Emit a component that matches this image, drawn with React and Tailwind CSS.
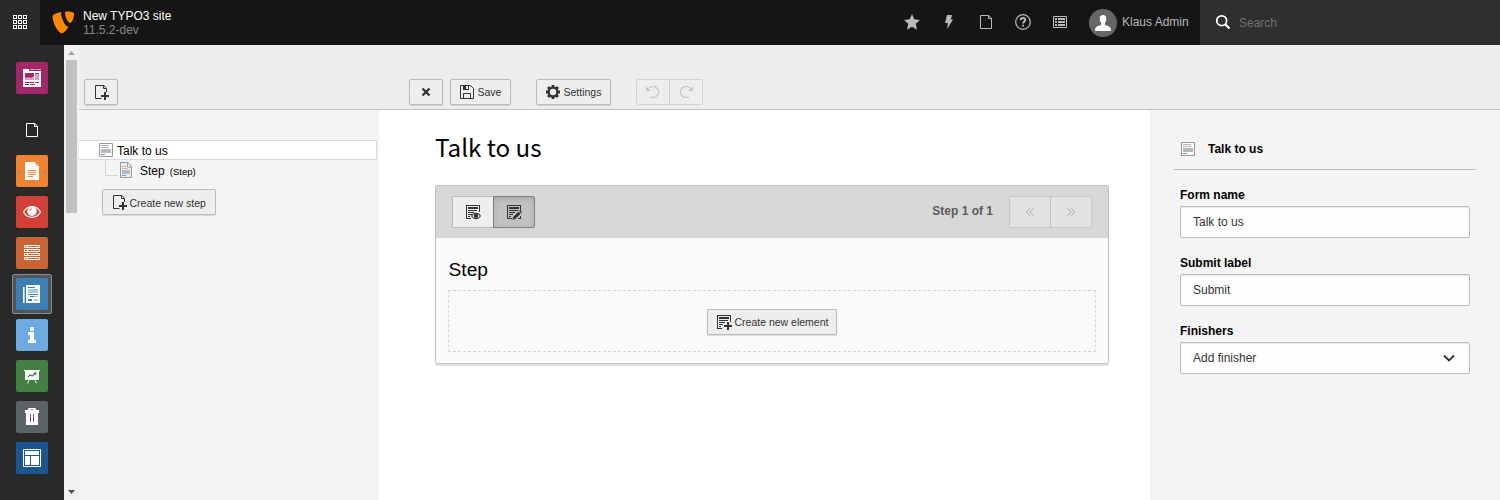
import React from "react";

const Svg = ({ size = 16, box = 16, className = "", children }) => (
  <svg width={size} height={size} viewBox={`0 0 ${box} ${box}`} fill="currentColor" className={`block shrink-0 ${className}`}>
    {children}
  </svg>
);

const Line = (props) => <path fill="none" stroke="currentColor" {...props} />;

/* ---------- action icons, 16px grid ---------- */

const PageIcon = () => (
  <Svg>
    <Line d="M2.5 1.5h8.3l2.7 2.7v10.3h-11z" />
    <Line d="M10.5 2v2.5h3" />
  </Svg>
);

const PageAddIcon = () => (
  <Svg>
    <Line d="M8.5 14.5h-6v-13h8.3l2.7 2.7v3.8" />
    <Line d="M10.5 2v2.5h3" />
    <path d="M11 8h2v3h3v2h-3v3h-2v-3H8v-2h3z" />
  </Svg>
);

const CloseIcon = () => (
  <Svg>
    <Line d="M4.5 4.5l7 7M11.5 4.5l-7 7" strokeWidth="2.3" />
  </Svg>
);

const SaveIcon = () => (
  <Svg>
    <Line d="M1.5 1.5h10l3 3v10h-13z" />
    <path d="M4 1h6v5H4zm3 1v3h2V2z" fillRule="evenodd" />
    <Line d="M4.5 14.5v-5h7v5" />
  </Svg>
);

const CogIcon = () => (
  <Svg>
    <circle cx="8" cy="8" r="4.4" fill="none" stroke="currentColor" strokeWidth="2.3" />
    <path d="M6.6 1h2.8v2.6H6.6zM6.6 12.4h2.8V15H6.6zM1 6.6h2.6v2.8H1zM12.4 6.6H15v2.8h-2.6z" />
    <path transform="rotate(45 8 8)" d="M6.6 1h2.8v2.6H6.6zM6.6 12.4h2.8V15H6.6zM1 6.6h2.6v2.8H1zM12.4 6.6H15v2.8h-2.6z" />
  </Svg>
);

const UndoIcon = ({ flip }) => (
  <Svg className={flip ? "-scale-x-100" : ""}>
    <Line d="M4 4.2A5.5 5.5 0 1 1 5.3 12.8" strokeWidth="1.1" />
    <path d="M1.2 2.6v4.2h4.3z" />
  </Svg>
);

const FormLines = () => (
  <>
    <path d="M1 1h14v7h-1V2H2v12h4v1H1z" />
    <path d="M3 3h10v2H3zM3 6h9v1H3zM3 8h6v1H3zM3 10h4v1H3zM3 12h2v1H3z" />
  </>
);

const FormPreviewIcon = () => (
  <Svg>
    <FormLines />
    <path fillRule="evenodd" d="M6 12c1.2-2 3-3.2 5-3.2s3.9 1.200 5 3.200c-1.200 2-3 3.200-5 3.200S7.100 14 6 12zm1.300 0c.700 1.300 1.900 2.200 3.700 2.200s3-.900 3.700-2.200c-.700-1.300-1.900-2.200-3.700-2.200s-3 .900-3.700 2.200z" />
    <circle cx="11" cy="11.700" r="2.200" />
  </Svg>
);

const FormEditIcon = () => (
  <Svg>
    <FormLines />
    <path d="M6.500 15.800l.700-2.800 5.300-5.300 2.100 2.100-5.300 5.300zM13.100 7.100l.8-.8 2.100 2.100-.8.8z" />
    <path d="M14 12h1v3h-3v-1h2z" />
  </Svg>
);

const FormAddIcon = () => (
  <Svg>
    <FormLines />
    <path d="M11 8h2v3h3v2h-3v3h-2v-3H8v-2h3z" />
  </Svg>
);

const ChevronsIcon = ({ flip }) => (
  <Svg className={flip ? "-scale-x-100" : ""}>
    <Line d="M8 4.300L4.400 8 8 11.700M11.600 4.300L8 8l3.600 3.700" />
  </Svg>
);

const FormIcon = () => (
  <Svg>
    <path fill="#fff" d="M1 1h14v14H1z" />
    <path fill="none" stroke="#999" d="M1.500 1.500h13v13h-13z" />
    <path fill="#b9b9b9" d="M3 3h8v1H3zM3 5h8v1H3zM3 7h10v4H3z" />
    <path fill="#5599ff" d="M3 12h4v1H3z" />
  </Svg>
);

const StepIcon = () => (
  <Svg>
    <path fill="#efefef" d="M2 0h8l4 4v12H2z" />
    <path fill="none" stroke="#999" d="M2.500.500h7.300l3.700 3.700v11.300h-11z" />
    <path fill="none" stroke="#999" d="M9.500 1v4h4" />
    <path fill="#b9b9b9" d="M4 4h4v1H4zM4 6h6v1H4zM4 8h8v4H4z" />
    <path fill="#5599ff" d="M4 13h4v1H4z" />
  </Svg>
);

/* ---------- top bar icons ---------- */

const GridIcon = () => (
  <Svg>
    {[1.5, 6.5, 11.5].map((y) =>
      [1.5, 6.5, 11.5].map((x) => <rect key={`${x}-${y}`} x={x} y={y} width="3" height="3" fill="none" stroke="currentColor" />)
    )}
  </Svg>
);

const Logo = () => (
  <Svg size={27}>
    <path d="M11.1 10.3c-.2 0-.3.1-.5.1C9 10.4 6.6 4.800 6.600 2.900c0-.700.200-.900.400-1.100C5 2 2.600 2.800 1.800 3.700c-.200.300-.300.600-.300 1.100 0 2.900 3.100 9.600 5.400 9.600 1 0 2.700-1.600 4.200-4.100M10.100 1.500c2.100 0 4.200.300 4.200 1.500 0 2.400-1.500 5.300-2.300 5.300-1.400 0-3.100-3.900-3.100-5.800 0-.9.3-1 1.200-1" />
  </Svg>
);

const StarIcon = () => (
  <Svg>
    <path d="M8 0l2.300 5.300L16 5.900l-4.200 3.900L13 15.700 8 12.700l-5 3 1.200-5.900L0 5.900l5.700-.6z" />
  </Svg>
);

const BoltIcon = () => (
  <Svg>
    <path d="M6 1h5L9.800 5.500H12L6.200 15l.7-6H4z" />
  </Svg>
);

const HelpIcon = () => (
  <Svg>
    <circle cx="8" cy="8" r="7.300" fill="none" stroke="currentColor" strokeWidth="1.300" />
    <Line d="M5.700 6.300C5.700 4.800 6.700 4 8 4s2.300.800 2.300 2c0 1.600-2.200 1.600-2.200 3.600" strokeWidth="1.900" />
    <path d="M7.100 10.700H9v1.800H7.100z" />
  </Svg>
);

const ListIcon = () => (
  <Svg>
    <Line d="M1.500 2.500h13v11h-13z" />
    <path d="M3 4h2v2H3zM6 4h7v2H6zM3 7h2v2H3zM6 7h7v2H6zM3 10h2v2H3zM6 10h7v2H6z" />
  </Svg>
);

const AvatarIcon = () => (
  <Svg>
    <path d="M8 0c2.200 0 3.300 1.300 3.300 3.500 0 1.700-.6 3.500-1.400 4.400v1.900c.9.900 3.600 1.300 4.800 2.200 1 .700 1.300 2 1.300 4H0c0-2 .3-3.300 1.300-4 1.200-.9 3.900-1.300 4.800-2.200V7.900C5.300 7 4.700 5.200 4.700 3.500 4.700 1.300 5.800 0 8 0z" />
  </Svg>
);

const SearchIcon = () => (
  <Svg>
    <circle cx="6.700" cy="6.700" r="4.900" fill="none" stroke="currentColor" strokeWidth="1.800" />
    <Line d="M10.200 10.200l4.300 4.300" strokeWidth="2.200" />
  </Svg>
);

/* ---------- module icons, 32px grid ---------- */

const Dashboard = () => (
  <Svg size={32} box={32}>
    <path d="M7 7h6v2h12v16H7z" />
    <path fill="#d8a0c0" d="M14 7h5v1h-5zM20 7h5v1h-5z" />
    <path fill="#d8a0c0" d="M9 12h9v6H9zM19 12h4v6h-4z" />
    <path fill="#a4276a" d="M9 11h9v3l-3 2-2-1-2 1-2-1zM19 11h4v1h-4zM9 20h9v1H9zM19 20h4v1h-4zM9 22h4v1H9zM14 22h5v1h-5z" />
  </Svg>
);

const Document = () => (
  <Svg size={32} box={32}>
    <path d="M9 7h10v4h4v14H9z" />
    <path fill="#f9cda6" d="M19 7l4 4h-4z" />
    <path fill="#ef8534" d="M12 15h8v1h-8zM12 17h8v1h-8zM12 19h8v1h-8zM12 21h5v1h-5z" />
  </Svg>
);

const View = () => (
  <Svg size={32} box={32}>
    <path fill="none" stroke="currentColor" strokeWidth="1.300" d="M7.500 16c2-3.500 5-5.300 8.500-5.300s6.500 1.800 8.500 5.300c-2 3.500-5 5.300-8.500 5.300S9.500 19.500 7.500 16z" />
    <circle cx="16" cy="15.300" r="4.700" />
    <path d="M13.600 15.200c0-1.400.9-2.300 2.200-2.300" fill="none" stroke="#d13f38" strokeWidth=".900" />
  </Svg>
);

const Lists = () => (
  <Svg size={32} box={32}>
    {[8, 12, 16, 20].map((y) => (
      <g key={y}>
        <rect x="8.500" y={y + 0.5} width="15" height="2" fill="none" stroke="currentColor" />
        <rect x="11" y={y + 1} width="1" height="1" />
      </g>
    ))}
  </Svg>
);

const Forms = () => (
  <Svg size={32} box={32}>
    <path d="M10 7h14v18H10zM7 9h1v16H7z" />
    <path fill="#a9cbe2" d="M8 9h1v16H8zM12 11h10v4H12zM12 16h1v1h-1zM14 18h8v1h-8zM12 18h1v1h-1zM18 21h4v2h-4z" />
    <path fill="#3b7fb4" d="M12 9h7v1h-7zM12 16h10v1H12zM14 18h4v1h-4zM12 21h4v2h-4z" />
  </Svg>
);

const Info = () => (
  <Svg size={32} box={32}>
    <rect x="14" y="8" width="4" height="4" rx="1" />
    <path d="M12 13h6v8h2v3h-8v-3h2v-5h-2z" />
  </Svg>
);

const Report = () => (
  <Svg size={32} box={32}>
    <path d="M8 10h16v1h-1v9H9v-9H8z" />
    <path d="M13 20.300l-1.500 3M19 20.300l1.500 3" stroke="currentColor" />
    <path fill="none" stroke="#448041" strokeWidth="1.200" d="M12 16.800l2.500-2 1.500 1.200 4-3M17.800 12.800h2v2" />
  </Svg>
);

const Trash = () => (
  <Svg size={32} box={32}>
    <path fillRule="evenodd" d="M12 9V8q0-1 1-1h6q1 0 1 1v1h3v3h-1v12H10V12H9V9zM14 8.500V9h4v-.500zM14 13v8h1v-8zM17 13v8h1v-8z" />
  </Svg>
);

const Template = () => (
  <Svg size={32} box={32}>
    <path fill="none" stroke="currentColor" d="M7.500 7.500h17v17h-17z" />
    <path d="M9 9h14v4H9zM9 14h5v9H9zM15 14h8v9h-8z" />
  </Svg>
);

/* ---------- controls ---------- */

const Btn = ({ className = "", children }) => (
  <button type="button" className={`flex h-[26px] items-center gap-[2.5px] rounded-xs border border-[#bbb] bg-[#eee] pl-2 text-[10.5px] whitespace-nowrap text-[#333] shadow-[0_1px_1px_rgba(0,0,0,0.12)] ${className}`}>
    {children}
  </button>
);

const Module = ({ color, children }) => <div className={`size-8 rounded-xs ${color}`}>{children}</div>;

const Field = ({ label, value, children }) => (
  <div className="mb-[14px]">
    <div className="h-[22px] text-xs leading-[22px] font-bold text-black">{label}</div>
    <div className="flex h-8 items-center justify-between rounded-xs border border-[#bbb] bg-[#fefefe] pr-3 pl-3 text-xs text-[#333] shadow-[inset_0_1px_1px_rgba(0,0,0,0.075)]">
      <span>{value}</span>
      {children}
    </div>
  </div>
);

export default function App() {
  return (
    <div className="flex h-[500px] w-[1500px] flex-col overflow-hidden bg-white font-['Liberation_Sans',Arial,sans-serif] text-xs text-black">
      <header className="flex h-[45px] shrink-0 bg-[#151515] text-[#b9b9b9]">
        <div className="flex w-10 justify-center bg-[#292929] pt-[14px] text-white">
          <GridIcon />
        </div>
        <div className="flex flex-1 pt-[9px] pl-[9.5px] text-[#ff8700]">
          <Logo />
          <div className="pl-[6.5px] text-xs leading-[14px]">
            <div className="text-white">New TYPO3 site</div>
            <div className="text-[#888]">11.5.2-dev</div>
          </div>
        </div>
        <div className="flex gap-[21px] pt-[14px] pr-[21px]">
          <StarIcon />
          <BoltIcon />
          <PageIcon />
          <HelpIcon />
          <ListIcon />
        </div>
        <div className="flex w-[111px] items-center gap-[5px]">
          <div className="flex size-7 items-center justify-center rounded-full bg-[#666] text-white">
            <AvatarIcon />
          </div>
          <span className="pb-[2px] whitespace-nowrap">Klaus Admin</span>
        </div>
        <div className="flex w-[300px] items-center gap-2 bg-[#2f2f2f] pl-[15px] text-white">
          <div className="pb-px"><SearchIcon /></div>
          <span className="text-[#707070]">Search</span>
        </div>
      </header>

      <div className="flex min-h-0 flex-1">
        <nav className="flex w-16 flex-col items-center bg-[#292929] pt-[17px] text-white">
          <Module color="bg-[#a4276a]"><Dashboard /></Module>
          <div className="pt-7 pb-[17px]"><PageIcon /></div>
          <div className="flex flex-col items-center gap-[9px]">
            <Module color="bg-[#ef8534]"><Document /></Module>
            <Module color="bg-[#d13f38]"><View /></Module>
            <Module color="bg-[#c96434]"><Lists /></Module>
            <div className="-my-1 rounded-xs border border-[#8a8a8a] bg-[#545454] p-[3px]">
              <Module color="bg-[#3b7fb4]"><Forms /></Module>
            </div>
            <Module color="bg-[#6daae0]"><Info /></Module>
            <Module color="bg-[#448041]"><Report /></Module>
            <Module color="bg-[#5c6366]"><Trash /></Module>
            <Module color="bg-[#1a568f]"><Template /></Module>
          </div>
        </nav>

        <div className="flex w-[15px] flex-col items-center bg-[#f1f1f1]">
          <svg width="15" height="15" className="block shrink-0"><path d="M4 10l3.500-4 3.500 4z" fill="#a3a3a3" /></svg>
          <div className="h-[153px] w-[11px] shrink-0 bg-[#c1c1c1]" />
          <div className="flex-1" />
          <svg width="15" height="15" className="block shrink-0"><path d="M4 5l3.500 4L11 5z" fill="#505050" /></svg>
        </div>

        <div className="flex flex-1 flex-col">
          <div className="flex h-[65px] shrink-0 items-end border-b border-[#c3c3c3] bg-[#ededed] pb-1 pl-[5px]">
            <Btn className="w-[34px]"><PageAddIcon /></Btn>
            <Btn className="ml-[291px] w-[34px]"><CloseIcon /></Btn>
            <Btn className="ml-[7px] w-[61px]"><SaveIcon />Save</Btn>
            <Btn className="ml-[25px] w-[75px]"><CogIcon />Settings</Btn>
            <div className="ml-[25px] flex h-[26px] w-[67px] rounded-xs border border-[#d3d3d3] text-[#bdbdbd]">
              <div className="flex w-[33px] items-center justify-center border-r border-[#cfcfcf]"><UndoIcon /></div>
              <div className="flex flex-1 items-center justify-center"><UndoIcon flip /></div>
            </div>
          </div>

          <div className="flex flex-1">
            <aside className="w-[300px] bg-[#f4f4f4] pt-[30px]">
              <div className="flex h-5 w-[298px] items-center gap-[3px] rounded-r-xs border border-l-0 border-[#d8d8d8] bg-white pl-[19px]">
                <FormIcon />
                <span className="pt-[2px]">Talk to us</span>
              </div>
              <div className="flex h-[29px] items-start pl-[26px]">
                <div className="h-4 w-[13px] border-b border-l border-[#d4d4d4]" />
                <div className="pt-[2px]"><StepIcon /></div>
                <span className="pt-[3px] pl-[6px] leading-4">Step</span>
                <span className="pt-1 pl-[5px] text-[9.6px] leading-4">(Step)</span>
              </div>
              <Btn className="ml-[23px] w-[114px]"><PageAddIcon /><span className="pt-[2px]">Create new step</span></Btn>
            </aside>

            <main className="w-[771px] bg-white px-[56px] pt-[21px] pr-[41px]">
              <h1 className="h-[54px] font-['Noto_Sans_CJK_JP',sans-serif] text-[24.200px] leading-[32px]">Talk to us</h1>
              <section className="rounded-xs border border-[#c3c3c3] bg-[#fafafa] shadow-[0_2px_0_#e4e4e4]">
                <div className="flex h-[52px] items-start bg-[#d7d7d7] pt-[10px] pl-4 text-[#333]">
                  <div className="flex h-8 w-[41px] items-center justify-center rounded-l-xs border border-r-0 border-[#bbb] bg-[#eee]"><FormPreviewIcon /></div>
                  <div className="flex h-8 w-[42px] items-center justify-center rounded-r-xs border border-[#7f7f7f] bg-[#c1c1c1] shadow-[inset_0_2px_4px_rgba(0,0,0,0.15)]"><FormEditIcon /></div>
                  <div className="ml-auto pr-4 leading-[30px] font-bold text-[#5a5a5a]">Step 1 of 1</div>
                  <div className="mr-4 flex h-8 w-[83px] rounded-xs border border-[#c7c7c7] bg-[#e2e2e2] text-[#a8a8a8]">
                    <div className="flex w-[41px] items-center justify-center border-r border-[#c3c3c3]"><ChevronsIcon /></div>
                    <div className="flex flex-1 items-center justify-center"><ChevronsIcon flip /></div>
                  </div>
                </div>
                <div className="px-3 pt-5 pb-[11px]">
                  <h2 className="h-8 pl-[0.5px] text-[19.2px] leading-6">Step</h2>
                  <div className="flex h-[62px] items-start justify-center border border-dashed border-[#d7d7d7] pt-[18px]">
                    <Btn className="w-[130px]"><FormAddIcon />Create new element</Btn>
                  </div>
                </div>
              </section>
            </main>

            <aside className="flex-1 bg-[#f4f4f4] px-6 pt-[19px]">
              <div className="flex h-[41px] items-center gap-3 border-b border-[#bbb] pl-[6px] text-xs font-bold">
                <FormIcon />
                Talk to us
              </div>
              <div className="px-[6px] pt-[14px]">
                <Field label="Form name" value="Talk to us" />
                <Field label="Submit label" value="Submit" />
                <Field label="Finishers" value="Add finisher">
                  <Svg><Line d="M3 5.500l5 5 5-5" strokeWidth="1.800" /></Svg>
                </Field>
              </div>
            </aside>
          </div>
        </div>
      </div>
    </div>
  );
}
